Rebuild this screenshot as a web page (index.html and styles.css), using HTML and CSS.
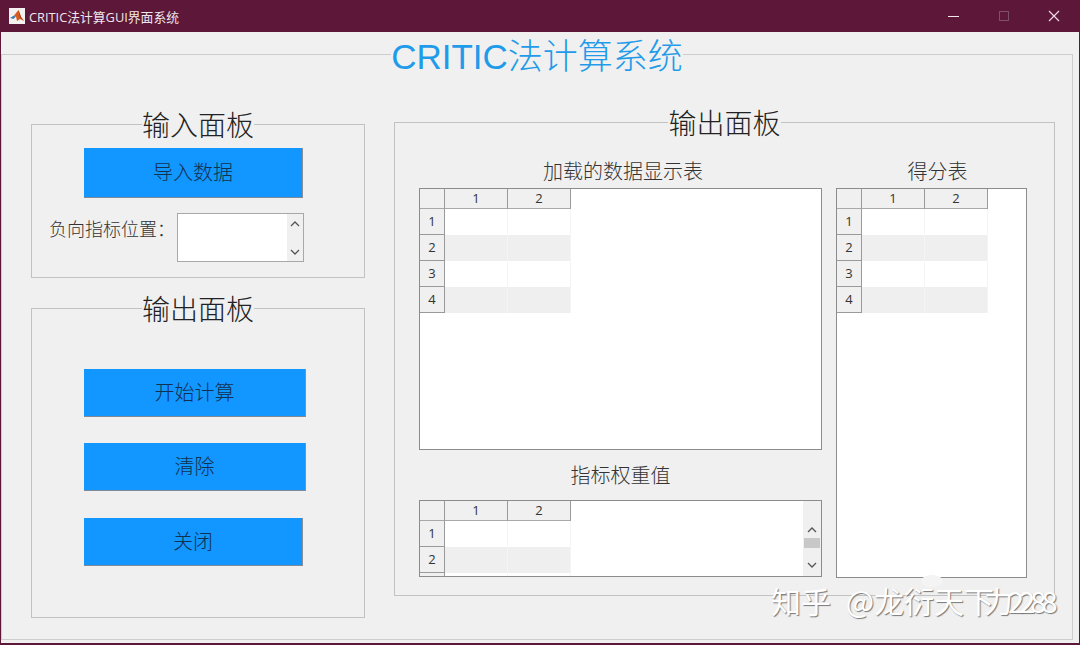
FILE: index.html
```html
<!DOCTYPE html>
<html lang="zh-CN">
<head>
  <meta charset="UTF-8">
  <meta name="viewport" content="width=device-width, initial-scale=1.0">
  <title>CRITIC法计算GUI界面系统</title>
  <link rel="stylesheet" href="styles.css">
</head>
<body>
  <div class="window">
    <div class="titlebar">
      <svg class="app-icon" width="16" height="16" viewBox="0 0 16 16">
        <rect width="16" height="16" fill="#f4f1f0"/>
        <path d="M1 10 L5 7.5 L7 8.5 L4.5 11 Z" fill="#3f7fb5"/>
        <path d="M5 7.5 L9.5 2 L12 9 L15 13 L11 11 L8 13 L7 8.5 Z" fill="#d9591c"/>
        <path d="M9.5 2 L12 9 L15 13 L11 9 Z" fill="#8f2d12"/>
      </svg>
      <span class="app-name">CRITIC法计算GUI界面系统</span>
      <div class="win-btns">
        <div class="win-btn"><svg width="12" height="12" viewBox="0 0 12 12"><path d="M0 6.5H11" stroke="#f3e6ec" stroke-width="1"/></svg></div>
        <div class="win-btn"><svg width="12" height="12" viewBox="0 0 12 12"><rect x="1.5" y="1.5" width="9" height="9" fill="none" stroke="#80506a"/></svg></div>
        <div class="win-btn"><svg width="12" height="12" viewBox="0 0 12 12"><path d="M1 1L11 11M11 1L1 11" stroke="#f3dfe8" stroke-width="1.1"/></svg></div>
      </div>
    </div>

    <fieldset class="main">
      <legend class="main-title">CRITIC法计算系统</legend>
      <div class="columns">
        <div class="left-col">
          <fieldset class="panel panel-input">
            <legend>输入面板</legend>
            <div class="panel-body">
              <button class="btn btn-import">导入数据</button>
              <div class="neg-row">
                <label>负向指标位置：</label>
                <div class="listbox">
                  <div class="scroll">
                    <svg width="10" height="6" viewBox="0 0 10 6"><path d="M1 5L5 1L9 5" fill="none" stroke="#555" stroke-width="1.3"/></svg>
                    <svg width="10" height="6" viewBox="0 0 10 6"><path d="M1 1L5 5L9 1" fill="none" stroke="#555" stroke-width="1.3"/></svg>
                  </div>
                </div>
              </div>
            </div>
          </fieldset>
          <fieldset class="panel panel-actions">
            <legend>输出面板</legend>
            <div class="panel-body actions-body">
              <button class="btn btn-wide">开始计算</button>
              <button class="btn btn-wide">清除</button>
              <button class="btn btn-close">关闭</button>
            </div>
          </fieldset>
        </div>

        <fieldset class="panel panel-output">
          <legend>输出面板</legend>
          <div class="tables">
            <div class="table-col table-col-main">
              <div class="caption caption-data">加载的数据显示表</div>
              <div class="grid-box box-data">
                <table>
                  <tr><th></th><th>1</th><th>2</th></tr>
                  <tr><th>1</th><td></td><td></td></tr>
                  <tr><th>2</th><td></td><td></td></tr>
                  <tr><th>3</th><td></td><td></td></tr>
                  <tr><th>4</th><td></td><td></td></tr>
                </table>
              </div>
              <div class="caption caption-weight">指标权重值</div>
              <div class="grid-box box-weight">
                <table>
                  <tr><th></th><th>1</th><th>2</th></tr>
                  <tr><th>1</th><td></td><td></td></tr>
                  <tr><th>2</th><td></td><td></td></tr>
                  <tr><th></th><td></td><td></td></tr>
                </table>
                <div class="scroll scroll-table">
                  <svg width="10" height="6" viewBox="0 0 10 6"><path d="M1 5L5 1L9 5" fill="none" stroke="#555" stroke-width="1.3"/></svg>
                  <div class="thumb"></div>
                  <svg class="arrow-down" width="10" height="6" viewBox="0 0 10 6"><path d="M1 1L5 5L9 1" fill="none" stroke="#555" stroke-width="1.3"/></svg>
                </div>
              </div>
            </div>
            <div class="table-col table-col-score">
              <div class="caption caption-score">得分表</div>
              <div class="grid-box box-score">
                <table>
                  <tr><th></th><th>1</th><th>2</th></tr>
                  <tr><th>1</th><td></td><td></td></tr>
                  <tr><th>2</th><td></td><td></td></tr>
                  <tr><th>3</th><td></td><td></td></tr>
                  <tr><th>4</th><td></td><td></td></tr>
                </table>
              </div>
            </div>
          </div>
        </fieldset>
      </div>
    </fieldset>

    <div class="watermark">知乎 @龙衍天下<span class="watermark-over">力2288</span></div>
  </div>
</body>
</html>
```

FILE: styles.css
```css
* {
  box-sizing: border-box;
}
html, body {
  margin: 0;
  padding: 0;
}
body {
  width: 1080px;
  height: 645px;
  overflow: hidden;
  font-family: "Liberation Sans", "Noto Sans CJK SC", sans-serif;
  background: #f0f0f0;
}
.window {
  position: relative;
  width: 1080px;
  height: 645px;
  background: #f0f0f0;
  border: 1px solid #5c1739;
  border-width: 0 1px 2px 1px;
}

/* title bar */
.titlebar {
  display: flex;
  align-items: center;
  height: 32px;
  margin: 0 -1px;
  padding-left: 9px;
  background: #5c1739;
  color: #efe6ea;
}
.app-icon {
  flex: none;
}
.app-name {
  margin-left: 4px;
  font-family: "Open Sans", "Noto Sans CJK SC", sans-serif;
  font-size: 12.8px;
}
.win-btns {
  display: flex;
  margin-left: auto;
  margin-right: 1px;
}
.win-btn {
  display: flex;
  align-items: center;
  justify-content: center;
  width: 50px;
  height: 32px;
}

/* main frame */
fieldset {
  margin: 0;
  padding: 0;
  min-width: 0;
}
legend {
  position: relative;
  top: 3px;
  margin: 0 auto;
  padding: 0;
  font-weight: 300;
}
.main {
  width: 1072px;
  height: 608px;
  border: 1px solid #cdcdcd;
}
.main-title {
  font-size: 35px;
  line-height: 44px;
  color: #1f9bea;
}
.columns {
  display: flex;
  gap: 29px;
  padding: 30px 0 0 29px;
}
.left-col {
  display: flex;
  flex-direction: column;
  gap: 14px;
  width: 334px;
  margin-top: 2px;
}

/* panels */
.panel {
  border: 1px solid #c2c2c2;
}
.panel legend {
  font-size: 28px;
  line-height: 32px;
  color: #222;
}
.panel-body {
  padding: 8px 0 0 52px;
}
.panel-input {
  height: 170px;
}
.panel-actions {
  height: 326px;
}
.actions-body {
  display: flex;
  flex-direction: column;
  align-items: flex-start;
  gap: 26px;
  padding-top: 45px;
}
.panel-output {
  width: 661px;
  height: 490px;
}

/* buttons */
.btn {
  display: block;
  width: 219px;
  height: 50px;
  padding: 0 0 2px;
  border: 0;
  border-right: 1px solid #8a8f96;
  border-bottom: 1px solid #7f8a96;
  background: #1296ff;
  color: #12304f;
  font-family: inherit;
  font-size: 20px;
  font-weight: 300;
}
.actions-body .btn {
  height: 48px;
}
.actions-body .btn-wide {
  width: 222px;
}
.actions-body .btn-close {
  margin-top: 1px;
}
.neg-row {
  display: flex;
  align-items: center;
  margin: 15px 0 0 -35px;
}
.neg-row label {
  width: 128px;
  padding-bottom: 16px;
  font-size: 18px;
  font-weight: 300;
  line-height: 24px;
  color: #333;
  white-space: nowrap;
}
.listbox {
  display: flex;
  justify-content: flex-end;
  width: 127px;
  height: 49px;
  background: #fff;
  border: 1px solid #a8a8a8;
}
.scroll {
  display: flex;
  flex-direction: column;
  align-items: center;
  justify-content: space-between;
  width: 16px;
  padding: 7px 0 6px;
  background: #f0f0f0;
}

/* tables */
.tables {
  display: flex;
  gap: 14px;
  padding: 21px 0 0 24px;
}
.table-col {
  display: flex;
  flex-direction: column;
}
.table-col-main {
  width: 403px;
}
.table-col-score {
  width: 191px;
}
.caption {
  height: 24px;
  margin-bottom: 5px;
  font-size: 20px;
  font-weight: 300;
  line-height: 26px;
  text-align: center;
  color: #333;
}
.caption-data {
  padding-left: 5px;
}
.caption-score {
  padding-left: 12px;
}
.caption-weight {
  margin: 13px 0 13px;
}
.grid-box {
  display: flex;
  justify-content: space-between;
  overflow: hidden;
  background: #fff;
  border: 1px solid #8c8c8c;
}
.box-data {
  height: 262px;
}
.box-weight {
  height: 77px;
}
.box-score {
  height: 390px;
}
table {
  flex: none;
  align-self: flex-start;
  width: 151px;
  table-layout: fixed;
  border-collapse: separate;
  border-spacing: 0;
  font-family: "Open Sans", sans-serif;
  font-size: 13px;
  line-height: 16px;
  color: #333;
}
th {
  height: 26px;
  padding: 0 0 2px;
  background: #f0f0f0;
  border-right: 1px solid #9a9a9a;
  border-bottom: 1px solid #9a9a9a;
  font-weight: 400;
}
th:first-child {
  width: 25px;
}
tr:first-child th {
  height: 20px;
  border-bottom-color: #a8a8a8;
}
td {
  height: 26px;
  padding: 0;
  border-right: 1px solid #f4f4f4;
}
tr:nth-child(odd) td {
  background: #efefef;
}
.scroll-table {
  flex: none;
  justify-content: flex-start;
  width: 18px;
  padding: 26px 0 0;
}
.thumb {
  width: 16px;
  height: 10px;
  margin-top: 5px;
  background: #c8c8c8;
}
.arrow-down {
  margin-top: 14px;
}

/* watermark sits over the frame */
.watermark {
  position: absolute;
  left: 770px;
  top: 582px;
  font-family: "Noto Sans CJK SC", sans-serif;
  font-size: 30px;
  line-height: 36px;
  word-spacing: 8px;
  white-space: nowrap;
  color: #fff;
  text-shadow: 1px 1px 1px #777;
}
.watermark::before {
  content: "";
  position: absolute;
  left: 150px;
  top: -7px;
  width: 22px;
  height: 12px;
  border-radius: 50%;
  background: #f4f4f4;
}
.watermark-over {
  margin-left: -10px;
  font-size: 29px;
  letter-spacing: -5px;
}
```
